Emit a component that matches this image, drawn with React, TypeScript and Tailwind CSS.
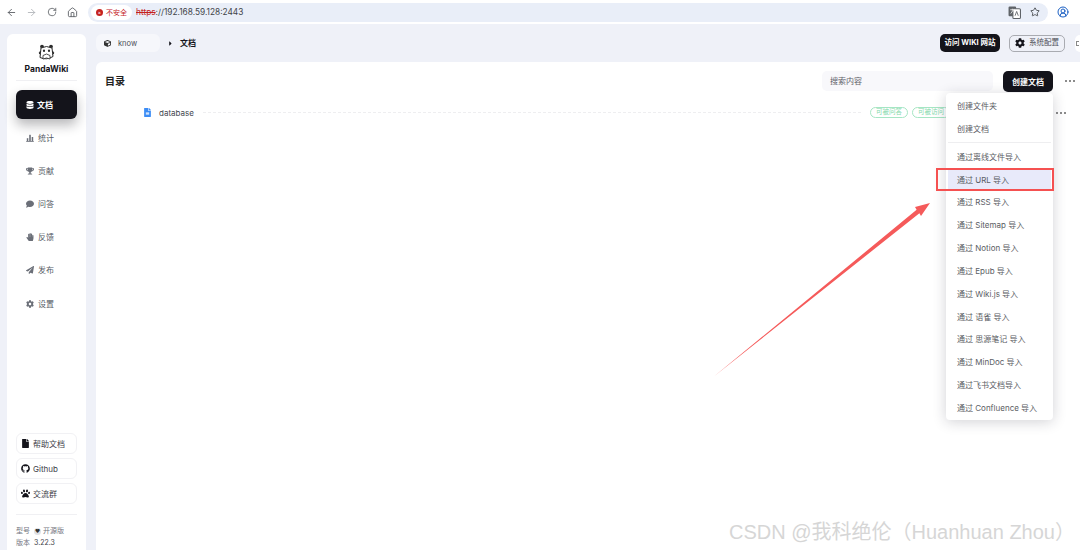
import { ArrowLeft, ArrowRight, RotateCw, Home, Star, CircleUserRound } from "lucide-react";
import {
  FaComment,
  FaCube,
  FaDatabase,
  FaFileAlt,
  FaGithub,
  FaHandPaper,
  FaPaperPlane,
  FaPaw,
  FaTrophy,
  FaCog,
  FaCaretRight,
  FaFile,
} from "react-icons/fa";

const FONT = "font-['Inter','Noto_Sans_CJK_SC',sans-serif]";

function BarsIcon({ size, className }: { size: number; className?: string }) {
  return (
    <svg width={size} height={size} viewBox="0 0 8 8" className={className} fill="currentColor">
      <rect x="0.2" y="7" width="7.6" height="0.8" />
      <rect x="0.8" y="4.2" width="1.5" height="2.8" />
      <rect x="3.2" y="0.8" width="1.6" height="6.2" />
      <rect x="5.7" y="3" width="1.5" height="4" />
    </svg>
  );
}

const NAV = [
  { label: "统计", icon: BarsIcon },
  { label: "贡献", icon: FaTrophy },
  { label: "问答", icon: FaComment },
  { label: "反馈", icon: FaHandPaper },
  { label: "发布", icon: FaPaperPlane },
  { label: "设置", icon: FaCog },
];

const LINKS = [
  { label: "帮助文档", icon: FaFile },
  { label: "Github", icon: FaGithub },
  { label: "交流群", icon: FaPaw },
];

const IMPORTS = [
  "通过 URL 导入",
  "通过 RSS 导入",
  "通过 Sitemap 导入",
  "通过 Notion 导入",
  "通过 Epub 导入",
  "通过 Wiki.js 导入",
  "通过 语雀 导入",
  "通过 思源笔记 导入",
  "通过 MinDoc 导入",
  "通过飞书文档导入",
  "通过 Confluence 导入",
];

function Dots() {
  return (
    <div className="flex w-[10px] justify-between">
      <i className="h-[2px] w-[2px] rounded-full bg-[#666]" />
      <i className="h-[2px] w-[2px] rounded-full bg-[#666]" />
      <i className="h-[2px] w-[2px] rounded-full bg-[#666]" />
    </div>
  );
}

function PandaLogo() {
  return (
    <svg width="17" height="17" viewBox="0 0 17 17" fill="none" stroke="#2a2a2a" strokeWidth="1">
      <circle cx="4" cy="2.6" r="1.9" fill="#2a2a2a" stroke="none" />
      <circle cx="13" cy="2.6" r="1.9" fill="#2a2a2a" stroke="none" />
      <path d="M3 4 Q8.5 1 14 4 L15 12.5 Q8.5 16.5 2 13.5 Z" fill="#fff" />
      <path d="M2.6 7 L1 9 L2.4 10.5 M14.4 7 L16 9 L14.6 10.5" />
      <path d="M5 11.5 L8.5 10 L12 11.5 L12 15 L8.5 14 L5 15 Z" fill="#fff" strokeWidth="0.8" />
      <ellipse cx="6" cy="6.8" rx="1.1" ry="1.3" fill="#2a2a2a" stroke="none" />
      <ellipse cx="11" cy="6.8" rx="1.1" ry="1.3" fill="#2a2a2a" stroke="none" />
    </svg>
  );
}

function TranslateIcon() {
  return (
    <svg width="13" height="13" viewBox="0 0 12 12">
      <rect x="0.5" y="0.5" width="7" height="9" rx="1" fill="#5f6368" />
      <rect x="4.5" y="2.5" width="7" height="9" rx="1" fill="#fff" stroke="#5f6368" />
      <path d="M6.5 9 L8 5 L9.5 9" fill="none" stroke="#5f6368" strokeWidth="0.8" />
      <path d="M2 3.5 H6 M4 2.5 V3.5 M2.5 7 L5 3.5" fill="none" stroke="#fff" strokeWidth="0.7" />
    </svg>
  );
}

function BrowserBar() {
  return (
    <div className="flex h-[24px] items-center bg-white">
      <div className="flex w-[88px] items-center pl-[6px] text-[#5f6368]">
        <ArrowLeft size={11} className="mr-[9px]" />
        <ArrowRight size={11} className="mr-[10px] text-[#b4b7bb]" />
        <RotateCw size={10} className="mr-[10px]" />
        <Home size={11} />
      </div>
      <div className="flex h-[19px] w-[960px] items-center justify-between rounded-full bg-[#e9eef8] pl-[3px] pr-[8px]">
        <div className="flex items-center">
          <div className="flex h-[15px] w-[41px] items-center justify-center gap-[3px] rounded-full bg-white">
            <span className="flex h-[7px] w-[7px] items-center justify-center rounded-full bg-[#c5221f] text-[5px] leading-none text-white">×</span>
            <span className="text-[7px] leading-none text-[#c5221f]">不安全</span>
          </div>
          <span className="ml-[4px] text-[8.3px] leading-none text-[#3f4448]">
            <span className="text-[#c5221f] line-through">https</span>://192.168.59.128:2443
          </span>
        </div>
        <div className="flex items-center gap-[9px]">
          <TranslateIcon />
          <Star size={10} className="text-[#3c4043]" />
        </div>
      </div>
      <div className="flex flex-1 justify-center pr-[2px]">
        <CircleUserRound size={12} className="text-[#1a5fc4]" />
      </div>
    </div>
  );
}

function Sidebar() {
  return (
    <aside className="flex h-[516px] w-[79px] shrink-0 flex-col items-center rounded-t-[6px] bg-white">
      <div className="mt-[10px]">
        <PandaLogo />
      </div>
      <div className="mt-[2px] text-[8.5px] font-bold leading-[12px] text-[#14141b]">PandaWiki</div>
      <div className="mt-[5px] h-px w-[61px] bg-[#f0f0f3]" />
      <div className="mt-[9px] flex h-[29px] w-[61px] items-center gap-[3px] rounded-[6px] bg-[#14141b] pl-[10px] text-[8px] font-bold text-white shadow-[0_6px_12px_rgba(20,20,27,0.3)]">
        <FaDatabase size={8} />
        <span>文档</span>
      </div>
      <nav className="mt-[2px] flex w-[61px] flex-col">
        {NAV.map((item) => (
          <div key={item.label} className="flex h-[33.2px] items-center gap-[4px] pl-[10px] text-[8px] text-[#555a64]">
            <item.icon size={8} className="text-[#6b6f78]" />
            <span>{item.label}</span>
          </div>
        ))}
      </nav>
      <div className="mt-auto flex w-[61px] flex-col gap-[4px]">
        {LINKS.map((item) => (
          <div
            key={item.label}
            className="flex h-[21px] items-center gap-[3px] rounded-[6px] border border-[#f1f1f4] pl-[4px] text-[8px] text-[#3e4048]"
          >
            <item.icon size={9} className="text-[#14141b]" />
            <span>{item.label}</span>
          </div>
        ))}
      </div>
      <div className="mt-[10px] h-px w-[61px] bg-[#f0f0f3]" />
      <div className="mt-[12px] mb-[3px] flex w-[61px] flex-col gap-[4px] text-[7px] leading-[8px] text-[#74777f]">
        <div className="flex items-center gap-[4px]">
          <span>型号</span>
          <span className="flex items-center gap-[2px]">
            <span className="flex h-[7px] w-[7px] items-center justify-center rounded-full bg-[#dfe1e6] text-[5px] text-[#333]">♥</span>
            开源版
          </span>
        </div>
        <div className="flex items-center gap-[4px]">
          <span>版本</span>
          <span className="text-[#3e4048]">3.22.3</span>
        </div>
      </div>
    </aside>
  );
}

function TopBar() {
  return (
    <div className="flex h-[18px] items-center">
      <div className="flex h-[18px] w-[64px] items-center gap-[7px] rounded-[6px] bg-[#f6f7fb] pl-[8px] pt-[1px] text-[7.5px] text-[#4a4d55]">
        <FaCube size={7} className="text-[#333]" />
        <span>know</span>
      </div>
      <FaCaretRight size={7} className="ml-[7px] text-[#14141b]" />
      <span className="ml-[6px] text-[8px] font-bold text-[#14141b]">文档</span>
      <div className="ml-auto flex h-[18px] w-[60px] items-center justify-center rounded-[5px] bg-[#14141b] text-[7.5px] font-bold text-white">
        访问 WIKI 网站
      </div>
      <div className="ml-[9px] flex h-[17px] w-[56px] items-center justify-center gap-[4px] rounded-[5px] border border-[#a9abb1] text-[7.5px] text-[#4e5058]">
        <FaCog size={10} className="text-[#14141b]" />
        <span>系统配置</span>
      </div>
      <div className="ml-[10px] flex h-[17px] w-[5px] items-center rounded-l-[5px] bg-white pl-[1px]">
        <div className="h-[5px] w-[3px] border border-r-0 border-[#888]" />
      </div>
    </div>
  );
}

function DocPanel() {
  return (
    <section className="mt-[10px] flex-1 rounded-tl-[6px] bg-white">
      <div className="flex h-[40px] items-start pl-[9px] pt-[9px]">
        <h2 className="mt-[3px] text-[10px] font-bold leading-[14px] text-[#222]">目录</h2>
        <div className="ml-auto flex h-[20px] w-[171px] items-center rounded-[5px] bg-[#f8f8fb] pl-[8px] text-[8px] text-[#5e6068]">
          搜索内容
        </div>
        <div className="ml-[10px] flex h-[21px] w-[50px] items-center justify-center rounded-[5px] bg-[#14141b] text-[8px] font-bold text-white">
          创建文档
        </div>
        <div className="mr-[5px] ml-[12px] mt-[9px]">
          <Dots />
        </div>
      </div>
      <div className="mt-[2px] flex h-[17px] items-center pl-[47px]">
        <FaFileAlt size={9} className="text-[#3b8cf5]" />
        <span className="ml-[7px] text-[8px] text-[#444750]">database</span>
        <div className="ml-[9px] h-0 w-[658px] border-t border-dashed border-[#eeeef0]" />
        <span className="ml-[9px] flex h-[11px] w-[38px] items-center justify-center rounded-full border border-[#a6e6c4] text-[6.5px] text-[#7fd8a9]">
          可被问答
        </span>
        <span className="ml-[4px] flex h-[11px] w-[38px] items-center justify-center rounded-full border border-[#a6e6c4] text-[6.5px] text-[#7fd8a9]">
          可被访问
        </span>
        <div className="ml-[106px]">
          <Dots />
        </div>
      </div>
    </section>
  );
}

function CreateMenu() {
  return (
    <div className="absolute left-[946px] top-[93px] w-[107px] rounded-[4px] bg-white py-[1px] text-[8px] text-[#5a5c63] shadow-[0_2px_14px_rgba(30,30,50,0.2)]">
      <div className="flex h-[23px] items-center pl-[11px]">创建文件夹</div>
      <div className="flex h-[23px] items-center pl-[11px]">创建文档</div>
      <div className="mx-[2px] my-[2px] h-px bg-[#eeeef0]" />
      <div className="flex h-[23px] items-center pl-[11px]">通过离线文件导入</div>
      {IMPORTS.map((label, i) => (
        <div
          key={label}
          className={
            i === 0
              ? "mx-[2px] flex h-[23px] items-center bg-[#e8eafa] pl-[9px]"
              : "flex h-[22.85px] items-center pl-[11px]"
          }
        >
          {label}
        </div>
      ))}
    </div>
  );
}

export default function App() {
  return (
    <div className={`relative h-[550px] w-[1080px] overflow-hidden bg-[#eff1f8] ${FONT}`}>
      <BrowserBar />
      <div className="flex h-[526px] pl-[7px] pt-[10px]">
        <Sidebar />
        <main className="ml-[10px] flex flex-1 flex-col">
          <TopBar />
          <DocPanel />
        </main>
      </div>
      <CreateMenu />
      {/* annotation layered on top of the shot */}
      <div className="absolute left-[936px] top-[168px] h-[23px] w-[118px] border-2 border-[#f55151]" />
      <svg className="absolute left-0 top-0" width="1080" height="550">
        <polygon points="714.5,376 916.6,209.8 915,207 930,203 921,216 919.4,213.2" fill="#f55a5a" />
      </svg>
      <div className="absolute left-[729px] top-[519px] whitespace-nowrap font-['Liberation_Sans','Noto_Sans_CJK_SC',sans-serif] text-[20px] leading-[26px] text-[#d6d6d6]">
        CSDN @我科绝伦（Huanhuan Zhou）
      </div>
    </div>
  );
}
